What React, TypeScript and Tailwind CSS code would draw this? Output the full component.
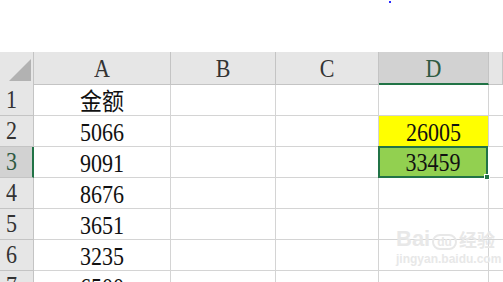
import React from 'react';

const cols = [
  { key: 'A', w: 'w-[137px]' },
  { key: 'B', w: 'w-[105px]' },
  { key: 'C', w: 'w-[103px]' },
  { key: 'D', w: 'w-[110px]' },
  { key: 'E', w: 'flex-1' },
];

const amounts = ['金额', '5066', '9091', '8676', '3651', '3235', '6500'];

// the screenshot's glyphs are a little taller than wide
function T({ children }: { children: React.ReactNode }) {
  return <span className="inline-block scale-y-110">{children}</span>;
}

function Corner() {
  return (
    <div className="w-[34px] h-full shrink-0 border-r border-[#c4c4c4]">
      <svg width="33" height="33" className="block">
        <polygon points="9,29 31,29 31,7" fill="#b2b2b2" />
      </svg>
    </div>
  );
}

function HeaderRow() {
  return (
    <div className="flex h-[33px] bg-[#e6e6e6]">
      <Corner />
      {cols.map((c) => (
        <div
          key={c.key}
          className={
            c.key === 'D'
              ? `${c.w} shrink-0 flex items-end justify-center pb-[3px] bg-[#d2d2d2] border-r border-[#c4c4c4] border-b-2 border-b-[#217346] text-[#2f5a42]`
              : `${c.w} shrink-0 flex items-end justify-center pb-[4px] border-r border-b border-[#c4c4c4] text-[#333]`
          }
        >
          {c.key === 'E' ? '' : <T>{c.key}</T>}
        </div>
      ))}
    </div>
  );
}

function Row({ n, text }: { n: number; text: string }) {
  const selected = n === 3;
  return (
    <div className="flex h-[31px]">
      <div
        className={
          selected
            ? 'w-[34px] shrink-0 flex items-center pl-[6px] bg-[#d2d2d2] border-b border-[#c4c4c4] border-r-2 border-r-[#217346] text-[#2f5a42]'
            : 'w-[34px] shrink-0 flex items-center pl-[6px] bg-[#e6e6e6] border-r border-b border-[#c4c4c4] text-[#333]'
        }
      >
        <T>{n}</T>
      </div>
      <div className="w-[137px] shrink-0 flex items-center justify-center pt-[3px] border-r border-b border-[#d4d4d4] text-[#111]">
        <T>{text}</T>
      </div>
      <div className="w-[105px] shrink-0 border-r border-b border-[#d4d4d4]" />
      <div className="w-[103px] shrink-0 border-r border-b border-[#d4d4d4]" />
      {n === 2 ? (
        <div className="w-[110px] shrink-0 flex items-center justify-center pt-[3px] bg-[#ffff00] border-r border-b border-[#d4d4d4] text-[#111]">
          <T>26005</T>
        </div>
      ) : n === 3 ? (
        <div className="w-[110px] shrink-0 flex items-center justify-center pt-[2px] bg-[#92d050] border-2 border-[#217346] -mt-px h-[32px] -ml-px relative text-[#111]">
          <T>33459</T>
          <div className="absolute -right-[4px] -bottom-[4px] w-[6px] h-[6px] bg-[#217346] border border-white" />
        </div>
      ) : (
        <div className="w-[110px] shrink-0 border-r border-b border-[#d4d4d4]" />
      )}
      <div className="flex-1 border-b border-[#d4d4d4]" />
    </div>
  );
}

export default function App() {
  return (
    <div
      className="w-[503px] h-[282px] overflow-hidden bg-white relative text-[22px] leading-none"
      style={{ fontFamily: '"Liberation Serif", "Noto Sans CJK SC", serif' }}
    >
      <div className="h-[52px] relative">
        <div className="absolute left-[389px] top-[1px] w-[2px] h-[2px] bg-[#2a2aff]" />
      </div>
      <HeaderRow />
      {amounts.map((t, i) => (
        <Row key={i} n={i + 1} text={t} />
      ))}
      <div
        className="absolute left-[396px] top-[228px] text-[#e8e8e8] pointer-events-none"
        style={{ fontFamily: '"Liberation Sans", "Noto Sans CJK SC", sans-serif' }}
      >
        <div className="flex items-end gap-[2px] text-[22px] font-bold">
          <span>Bai</span>
          <span className="text-[12px] border-2 border-[#e8e8e8] rounded-full px-[3px]">du</span>
          <span className="text-[18px]">经验</span>
        </div>
        <div className="text-[12px] font-bold mt-[3px]">jingyan.baidu.com</div>
      </div>
    </div>
  );
}
